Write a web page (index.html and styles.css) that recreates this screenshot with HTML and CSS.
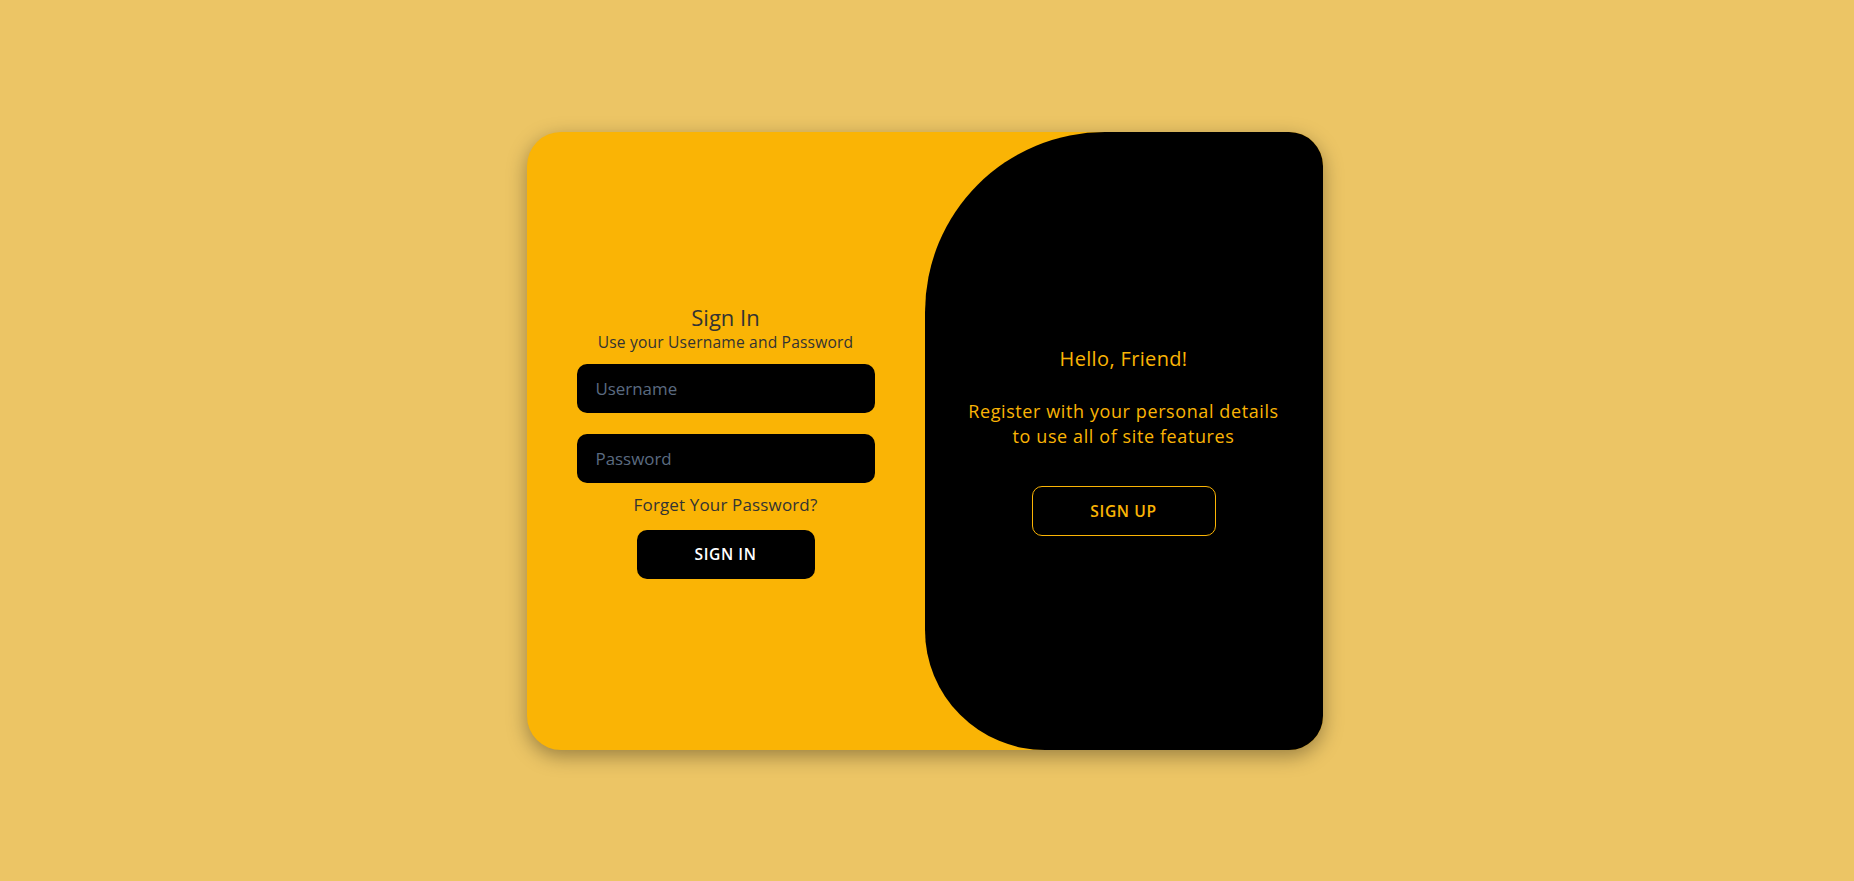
FILE: index.html
```html
<!DOCTYPE html>
<html lang="en">
<head>
<meta charset="utf-8">
<title>Sign In</title>
<link rel="stylesheet" href="styles.css">
</head>
<body>
  <div class="card">
    <form class="signin" onsubmit="return false;">
      <h1 class="signin-title">Sign In</h1>
      <span class="signin-sub">Use your Username and Password</span>
      <input class="field field-first" type="text" placeholder="Username">
      <input class="field" type="password" placeholder="Password">
      <a class="forgot" href="#">Forget Your Password?</a>
      <button class="btn btn-dark" type="button">Sign In</button>
    </form>
    <div class="toggle">
      <h1 class="toggle-title">Hello, Friend!</h1>
      <p class="toggle-text">Register with your personal details<br>to use all of site features</p>
      <button class="btn btn-outline" type="button">Sign Up</button>
    </div>
  </div>
</body>
</html>
```

FILE: styles.css
```css
* {
  box-sizing: border-box;
}

html, body {
  height: 100%;
}

body {
  margin: 0;
  padding-right: 5px;
  background: #ecc565;
  font-family: "Open Sans", "Liberation Sans", sans-serif;
  display: flex;
  align-items: center;
  justify-content: center;
}

.card {
  width: 796px;
  height: 618px;
  background: #fab405;
  border-radius: 34px;
  overflow: hidden;
  display: grid;
  grid-template-columns: 1fr 1fr;
  box-shadow: 0 6px 20px rgba(0, 0, 0, 0.35);
}

.signin {
  display: flex;
  flex-direction: column;
  align-items: center;
  justify-content: center;
  padding: 0 50px;
  margin: 0;
}

.signin-title {
  margin: 0;
  font-size: 22px;
  line-height: 28px;
  font-weight: 400;
  color: #333;
}

.signin-sub {
  margin-top: 1px;
  font-size: 15.6px;
  line-height: 20px;
  letter-spacing: 0.18px;
  color: #333;
}

.field {
  display: block;
  width: 100%;
  height: 49px;
  margin-top: 21px;
  padding: 0 19px;
  border: none;
  border-radius: 10px;
  background: #000;
  color: #ddd;
  font-family: inherit;
  font-size: 16.9px;
  outline: none;
}

.field-first {
  margin-top: 12px;
}

.field::placeholder {
  color: #5b6b80;
  opacity: 1;
}

.forgot {
  margin-top: 11px;
  font-size: 17px;
  line-height: 22px;
  letter-spacing: 0.15px;
  color: #333;
  text-decoration: none;
}

.btn {
  font-family: inherit;
  font-size: 15.6px;
  font-weight: 600;
  letter-spacing: 0.6px;
  text-transform: uppercase;
  border-radius: 10px;
  cursor: pointer;
}

.btn-dark {
  margin-top: 14px;
  width: 178px;
  height: 49px;
  border: none;
  background: #000;
  color: #fff;
}

.toggle {
  background: #000;
  border-radius: 180px 0 0 120px;
  display: flex;
  flex-direction: column;
  align-items: center;
  justify-content: center;
  text-align: center;
  padding: 0 30px;
  color: #fab405;
}

.toggle-title {
  margin: 0;
  font-size: 20px;
  line-height: 26px;
  font-weight: 400;
  letter-spacing: 0.35px;
}

.toggle-text {
  margin: 27px 0 0;
  font-size: 18px;
  line-height: 25px;
  letter-spacing: 0.6px;
}

.btn-outline {
  margin-top: 37px;
  width: 184px;
  height: 50px;
  background: transparent;
  border: 1px solid #fab405;
  color: #fab405;
}
```
